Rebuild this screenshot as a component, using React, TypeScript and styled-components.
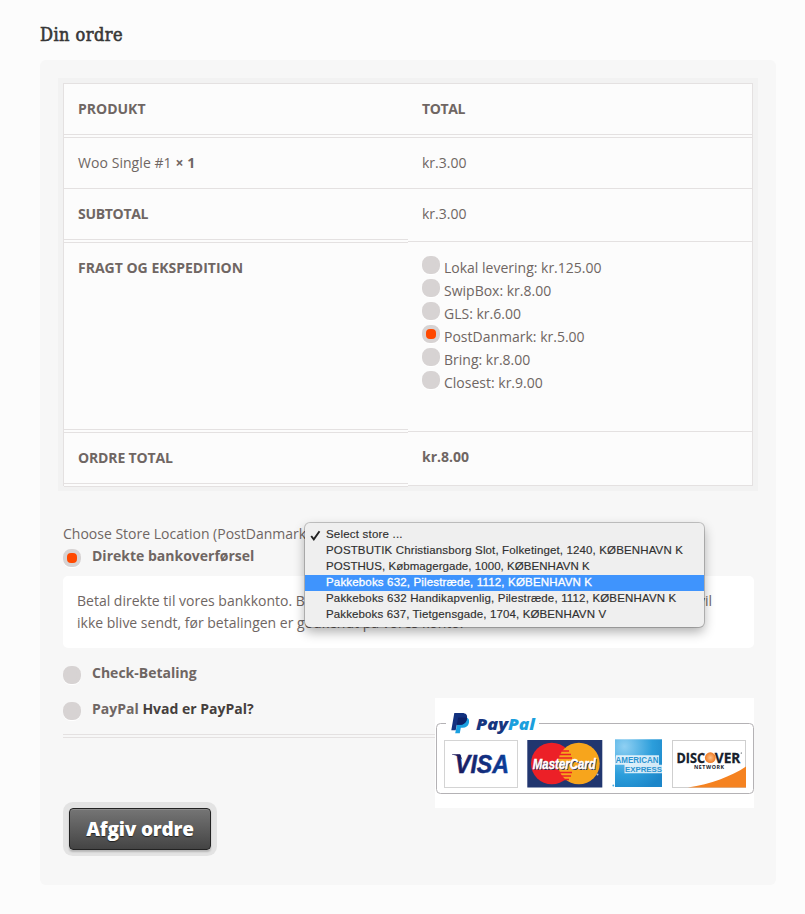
import React from "react";
import styled, { createGlobalStyle, css } from "styled-components";

const GlobalStyle = createGlobalStyle`
  * { box-sizing: border-box; }
  html, body { margin: 0; padding: 0; }
  body {
    background: #fcfcfc;
    color: #6f6663;
    font: 14px/22px "Open Sans", "Liberation Sans", sans-serif;
  }
`;

const line = "#e4e1e1";

const Page = styled.main`
  width: 805px;
  height: 914px;
  padding: 23px 29px 0 40px;
  overflow: hidden;
`;

const Title = styled.h3`
  margin: 0;
  height: 37px;
  color: #373737;
  font: 400 18px/24px "DejaVu Serif Condensed", "DejaVu Serif", serif;
  font-stretch: condensed;
  letter-spacing: 0.45px;
  -webkit-text-stroke: 0.6px #373737;
  white-space: nowrap;
`;

const Panel = styled.section`
  height: 825px;
  padding: 23px 22px 0 23px;
  border-radius: 6px;
  background: #f7f7f7;
`;

const Table = styled.div`
  width: 690px;
  height: 403px;
  border: 1px solid ${line};
  border-bottom: 0;
  background: #fcfcfc;
  box-shadow: 0 0 0 5px #f2f2f2;
`;

const Row = styled.div<{ $h: number }>`
  display: grid;
  grid-template-columns: 344px 344px;
  height: ${(p) => p.$h}px;
`;

const Cell = styled.div<{
  $rule?: "single" | "double";
  $bold?: boolean;
  $short?: boolean;
  $raised?: boolean;
  $track?: number;
}>`
  padding: 14px 14px 0;
  font-weight: ${(p) => (p.$bold ? 700 : 400)};
  letter-spacing: ${(p) => p.$track ?? 0}px;
  border-bottom: ${(p) => (p.$rule === "double" ? `4px double ${line}` : `1px solid ${line}`)};
  ${(p) => p.$short && css`margin-bottom: 1px;`}
  ${(p) => p.$raised && css`margin-top: -1px;`}
`;

const Shipping = styled.label`
  display: flex;
  gap: 4px;
  height: 23px;
  line-height: 24px;
`;

const Radio = styled.span<{ $on?: boolean }>`
  flex: none;
  width: 18px;
  height: 18px;
  border-radius: 8px;
  background: ${(p) => (p.$on ? "#ff4900" : "#d7d3d3")};
  border: 4px solid #d7d3d3;
  box-shadow: 0 1px 0 #fff;
`;

const Payment = styled.div`
  position: relative;
  margin-top: 36px;
  width: 691px;
`;

const StoreLabel = styled.div`
  height: 23px;
  padding-top: 1px;
  margin-top: 1px;
  white-space: nowrap;
`;

const Method = styled.label<{ $h: number }>`
  display: flex;
  gap: 11px;
  height: ${(p) => p.$h}px;
  font-weight: 700;
  white-space: nowrap;
  ${Radio} { margin-top: 4px; }
`;

const Link = styled.a`
  color: #453f3d;
`;

const Description = styled.div`
  height: 72px;
  margin-bottom: 14px;
  padding: 14px;
  border-radius: 5px;
  background: #fff;
  white-space: nowrap;
`;

const SpreadLine = styled.div`
  display: flex;
  justify-content: space-between;
  width: 635px;
`;

const PaypalRow = styled.div`
  display: flex;
  height: 110px;
`;

const PaypalChoice = styled.div`
  width: 372px;
  height: 40px;
  border-bottom: 4px double ${line};
`;

const Menu = styled.ul`
  position: absolute;
  left: 242px;
  top: 1px;
  width: 399px;
  margin: 0;
  padding: 4px 0;
  list-style: none;
  border-radius: 5px;
  background: #efefef;
  box-shadow: 0 0 0 1px rgba(0, 0, 0, 0.2), 0 5px 12px rgba(0, 0, 0, 0.32);
`;

const Option = styled.li<{ $active?: boolean; $track: number }>`
  display: flex;
  height: 16px;
  padding-left: 5px;
  font: 11.5px/15px "Liberation Sans", Arial, sans-serif;
  letter-spacing: ${(p) => p.$track}px;
  white-space: nowrap;
  color: ${(p) => (p.$active ? "#fff" : "#303030")};
  background: ${(p) => (p.$active ? "#3f94fd" : "transparent")};
  -webkit-text-stroke: ${(p) => (p.$active ? 0.3 : 0.15)}px currentColor;
`;

const Tick = styled.span`
  flex: none;
  width: 16px;
  svg { display: block; margin-top: 3px; }
`;

const Submit = styled.button`
  display: block;
  width: 142px;
  height: 42px;
  margin: 0 0 0 6px;
  padding: 1px 0 0;
  border: 1px solid #222;
  border-radius: 4px;
  background: linear-gradient(#757575, #444);
  box-shadow: inset 0 1px 0 #8b8b8b, 0 2px 2px rgba(0, 0, 0, 0.2), 0 0 0 6px #e3e3e3;
  color: #fff;
  font: 800 19px/39px "Open Sans", sans-serif;
  letter-spacing: -0.2px;
  text-shadow: 0 1px 1px #222;
  white-space: nowrap;
`;

const shipping = [
  "Lokal levering: kr.125.00",
  "SwipBox: kr.8.00",
  "GLS: kr.6.00",
  "PostDanmark: kr.5.00",
  "Bring: kr.8.00",
  "Closest: kr.9.00",
];

const stores: [string, number][] = [
  ["Select store ...", 0.2],
  ["POSTBUTIK Christiansborg Slot, Folketinget, 1240, KØBENHAVN K", 0.135],
  ["POSTHUS, Købmagergade, 1000, KØBENHAVN K", 0.05],
  ["Pakkeboks 632, Pilestræde, 1112, KØBENHAVN K", 0.165],
  ["Pakkeboks 632 Handikapvenlig, Pilestræde, 1112, KØBENHAVN K", 0.165],
  ["Pakkeboks 637, Tietgensgade, 1704, KØBENHAVN V", 0.12],
];

function PaymentCards() {
  const sans = "Open Sans, sans-serif";
  return (
    <svg width="319" height="110" viewBox="0 0 319 110">
      <defs>
        <linearGradient id="visa" x1="0" x2="1">
          <stop offset="0" stopColor="#1b1a5c" />
          <stop offset="1" stopColor="#0a3f9c" />
        </linearGradient>
        <radialGradient id="amex" cx="0.2" cy="0.15" r="1">
          <stop offset="0" stopColor="#8fd0f3" />
          <stop offset="0.6" stopColor="#2c9edb" />
          <stop offset="1" stopColor="#1c86c9" />
        </radialGradient>
        <radialGradient id="disc">
          <stop offset="0" stopColor="#fbc08a" />
          <stop offset="1" stopColor="#f07a22" />
        </radialGradient>
      </defs>
      <rect width="319" height="110" fill="#fff" />
      <path d="M11 25.5H5.5a4 4 0 0 0-4 4v62a4 4 0 0 0 4 4h309a4 4 0 0 0 4-4v-62a4 4 0 0 0-4-4H104" fill="none" stroke="#b4b2b5" />

      <path d="M23.500 19.500h6.400c3.600 0 4.700 2.200 4 5.500-.8 3.400-3 4.700-6.200 4.700h-1.900l-1 5.500h-4.600z" fill="#1ba0e0" />
      <path d="M19.300 15h7.800c4 0 5.600 2.100 4.900 5.700-.8 4.100-3.500 6-7.300 6h-2.900l-1.100 5.500h-4.400z" fill="#12317f" />
      <path d="M23.200 19.500h7.800c1 0 1.200.3 1 1.200-.8 4.100-3.500 6-7.300 6h-2.900z" fill="#0d2268" />
      <text x="41" y="32" fontFamily={sans} fontSize="16.500" fontWeight="800" fontStyle="italic" fill="#17367f" textLength="32" lengthAdjust="spacingAndGlyphs">Pay</text>
      <text x="73" y="32" fontFamily={sans} fontSize="16.500" fontWeight="800" fontStyle="italic" fill="#1b9fdd" textLength="27" lengthAdjust="spacingAndGlyphs">Pal</text>

      <rect x="9.500" y="42.500" width="73" height="47" fill="#fff" stroke="#d4d4d4" />
      <text x="20" y="74.500" fontFamily="Liberation Sans, sans-serif" fontSize="25.500" fontWeight="700" fontStyle="italic" fill="url(#visa)" stroke="url(#visa)" strokeWidth="0.500" textLength="54" lengthAdjust="spacingAndGlyphs">VISA</text>
      <path d="M17 56.200h8l2.500 6c-2-3-5-4.700-10.500-5.400z" fill="#1b1a5c" />

      <rect x="92.300" y="42" width="75" height="47.500" fill="#21366f" />
      <circle cx="116.800" cy="65.500" r="20.800" fill="#ec2027" />
      <circle cx="143.900" cy="65.500" r="20.800" fill="#f7a51c" />
      <path d="M127 53h7M125 56.500h11M124 60h13M124 74.500h13M125 78h11M127 81.500h7" stroke="#ec2027" strokeWidth="1.600" />
      <g fontFamily="Liberation Sans, sans-serif" fontSize="14.500" fontWeight="700" fontStyle="italic">
        <text x="98.600" y="72" fill="#222c5a" textLength="63" aria-hidden="true" lengthAdjust="spacingAndGlyphs">MasterCard</text>
        <text x="97.800" y="71" fill="#fff" stroke="#fff" strokeWidth="0.350" textLength="63" lengthAdjust="spacingAndGlyphs">MasterCard</text>
      </g>
      <circle cx="162.500" cy="76.500" r="1" fill="#b9bfd2" />

      <rect x="180" y="41.300" width="47" height="47.700" fill="url(#amex)" />
      <path d="M181 57.300h43v9.500h3v8.500h-37.500v-8.500H180z" fill="#fff" opacity="0.800" />
      <text x="180.500" y="65" fontFamily="Liberation Sans, sans-serif" fontSize="8.300" fontWeight="700" fill="#2b93d0" textLength="43" lengthAdjust="spacingAndGlyphs">AMERICAN</text>
      <text x="190" y="74" fontFamily="Liberation Sans, sans-serif" fontSize="8" fontWeight="700" fill="#2b93d0" textLength="37" lengthAdjust="spacingAndGlyphs">EXPRESS</text>
      <circle cx="178.300" cy="87.500" r="0.900" fill="#4aa8dc" />

      <rect x="237.500" y="42.500" width="73" height="47" fill="#fff" stroke="#cfcfcf" />
      <path d="M253 89.500c23-3.500 43-11 58-21v21z" fill="#f58220" />
      <g fontFamily={sans} fontSize="14.500" fontWeight="700" fill="#16202b" stroke="#16202b" strokeWidth="0.300">
        <text x="241.500" y="64.800" textLength="28.500" lengthAdjust="spacingAndGlyphs">DISC</text>
        <text x="279.800" y="64.800" textLength="25.500" lengthAdjust="spacingAndGlyphs">VER</text>
      </g>
      <circle cx="275.300" cy="59.700" r="5.400" fill="url(#disc)" />
      <circle cx="306.300" cy="55" r="0.600" fill="#16202b" />
      <text x="259" y="70.800" fontFamily={sans} fontSize="5.300" fontWeight="700" fill="#16202b" textLength="30">NETWORK</text>
    </svg>
  );
}

export default function App() {
  return (
    <Page>
      <GlobalStyle />
      <Title>Din ordre</Title>
      <Panel>
        <Table>
          <Row $h={54}>
            <Cell $bold $rule="double">PRODUKT</Cell>
            <Cell $bold $rule="double" $track={-0.35}>TOTAL</Cell>
          </Row>
          <Row $h={51}>
            <Cell $track={0.06}>Woo Single #1 <b>× 1</b></Cell>
            <Cell>kr.3.00</Cell>
          </Row>
          <Row $h={54}>
            <Cell $bold $rule="double" $track={-0.3}>SUBTOTAL</Cell>
            <Cell $short>kr.3.00</Cell>
          </Row>
          <Row $h={190}>
            <Cell $bold $rule="double">FRAGT OG EKSPEDITION</Cell>
            <Cell $short $raised>
              {shipping.map((name, i) => (
                <Shipping key={name}>
                  <Radio $on={i === 3} />
                  {name}
                </Shipping>
              ))}
            </Cell>
          </Row>
          <Row $h={54}>
            <Cell $bold $rule="double" $track={-0.15}>ORDRE TOTAL</Cell>
            <Cell $bold $short $raised>kr.8.00</Cell>
          </Row>
        </Table>

        <Payment>
          <StoreLabel>Choose Store Location (PostDanmark)</StoreLabel>
          <Method $h={31}>
            <Radio $on />
            <span>Direkte bankoverførsel</span>
          </Method>
          <Description>
            <SpreadLine>
              <span>Betal direkte til vores bankkonto. Brug venligst ordrenummer som reference. Ordren</span>
              <span>vil</span>
            </SpreadLine>
            ikke blive sendt, før betalingen er godkendt på vores konto.
          </Description>
          <Method $h={36}>
            <Radio />
            <span>Check-Betaling</span>
          </Method>
          <PaypalRow>
            <PaypalChoice>
              <Method $h={22}>
                <Radio />
                <span>PayPal <Link>Hvad er PayPal?</Link></span>
              </Method>
            </PaypalChoice>
            <PaymentCards />
          </PaypalRow>
          <Menu>
            {stores.map(([name, track], i) => (
              <Option key={name} $track={track} $active={i === 3}>
                <Tick>
                  {i === 0 && (
                    <svg width="11" height="11" viewBox="0 0 11 11">
                      <path d="M1.200 6 3.800 9.300 9.500 1.200" fill="none" stroke="#222" strokeWidth="1.900" />
                    </svg>
                  )}
                </Tick>
                {name}
              </Option>
            ))}
          </Menu>
        </Payment>
        <Submit>Afgiv ordre</Submit>
      </Panel>
    </Page>
  );
}
